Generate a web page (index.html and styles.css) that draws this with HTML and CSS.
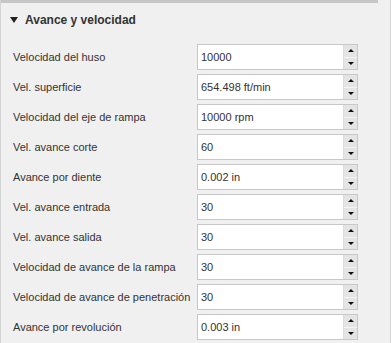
FILE: index.html
```html
<!DOCTYPE html>
<html lang="es">
<head>
  <meta charset="UTF-8">
  <title>Avance y velocidad</title>
  <link rel="stylesheet" href="styles.css">
</head>
<body>
  <div class="panel">
    <div class="topbar"></div>
    <div class="header">
      <span class="caret"></span>
      <span class="title">Avance y velocidad</span>
    </div>
    <div class="rows">
      <div class="row"><label>Velocidad del huso</label><div class="spin"><span class="val">10000</span><div class="btns"><span class="up"></span><span class="down"></span></div></div></div>
      <div class="row"><label>Vel. superficie</label><div class="spin"><span class="val">654.498 ft/min</span><div class="btns"><span class="up"></span><span class="down"></span></div></div></div>
      <div class="row"><label>Velocidad del eje de rampa</label><div class="spin"><span class="val">10000 rpm</span><div class="btns"><span class="up"></span><span class="down"></span></div></div></div>
      <div class="row"><label>Vel. avance corte</label><div class="spin"><span class="val">60</span><div class="btns"><span class="up"></span><span class="down"></span></div></div></div>
      <div class="row"><label>Avance por diente</label><div class="spin"><span class="val">0.002 in</span><div class="btns"><span class="up"></span><span class="down"></span></div></div></div>
      <div class="row"><label>Vel. avance entrada</label><div class="spin"><span class="val">30</span><div class="btns"><span class="up"></span><span class="down"></span></div></div></div>
      <div class="row"><label>Vel. avance salida</label><div class="spin"><span class="val">30</span><div class="btns"><span class="up"></span><span class="down"></span></div></div></div>
      <div class="row"><label>Velocidad de avance de la rampa</label><div class="spin"><span class="val">30</span><div class="btns"><span class="up"></span><span class="down"></span></div></div></div>
      <div class="row"><label>Velocidad de avance de penetración</label><div class="spin"><span class="val">30</span><div class="btns"><span class="up"></span><span class="down"></span></div></div></div>
      <div class="row"><label>Avance por revolución</label><div class="spin"><span class="val">0.003 in</span><div class="btns"><span class="up"></span><span class="down"></span></div></div></div>
    </div>
  </div>
</body>
</html>
```

FILE: styles.css
```css
html, body {
  margin: 0;
  height: 100%;
  background-color: #f0f0f0;
  font-family: "Liberation Sans", Arial, sans-serif;
  color: #333;
}
.panel {
  width: 389px;
  height: 343px;
  border-left: 1px solid #d4d4d4;
  border-right: 1px solid #d4d4d4;
  overflow: hidden;
}
.topbar {
  width: 377px;
  height: 3px;
  background-color: #c6c6c6;
}
.header {
  display: flex;
  align-items: center;
  height: 34px;
  padding-left: 9px;
}
.caret {
  width: 0;
  height: 0;
  border-left: 4px solid transparent;
  border-right: 4px solid transparent;
  border-top: 6px solid #222;
  margin-right: 7px;
}
.title {
  font-size: 12px;
  font-weight: bold;
  color: #333;
}
.rows {
  padding-top: 7px;
  display: flex;
  flex-direction: column;
  gap: 4px;
}
.row {
  display: flex;
  align-items: center;
  height: 26px;
  padding-left: 12px;
}
.row label {
  width: 184px;
  font-size: 11px;
  white-space: nowrap;
}
.spin {
  display: flex;
  width: 159px;
  height: 24px;
  border: 1px solid #c8c8c8;
  background-color: #fff;
}
.val {
  flex: 1;
  display: flex;
  align-items: center;
  padding-left: 3px;
  font-size: 11px;
}
.btns {
  width: 13px;
  display: flex;
  flex-direction: column;
  border-left: 1px solid #dcdcdc;
  background-color: #e4e4e4;
}
.up, .down {
  flex: 1;
  display: flex;
  align-items: center;
  justify-content: center;
}
.up {
  border-bottom: 1px solid #f4f4f4;
}
.up::after, .down::after {
  content: "";
  width: 0;
  height: 0;
  border-left: 3px solid transparent;
  border-right: 3px solid transparent;
}
.up::after {
  border-bottom: 3px solid #111;
}
.down::after {
  border-top: 3px solid #111;
}
```
